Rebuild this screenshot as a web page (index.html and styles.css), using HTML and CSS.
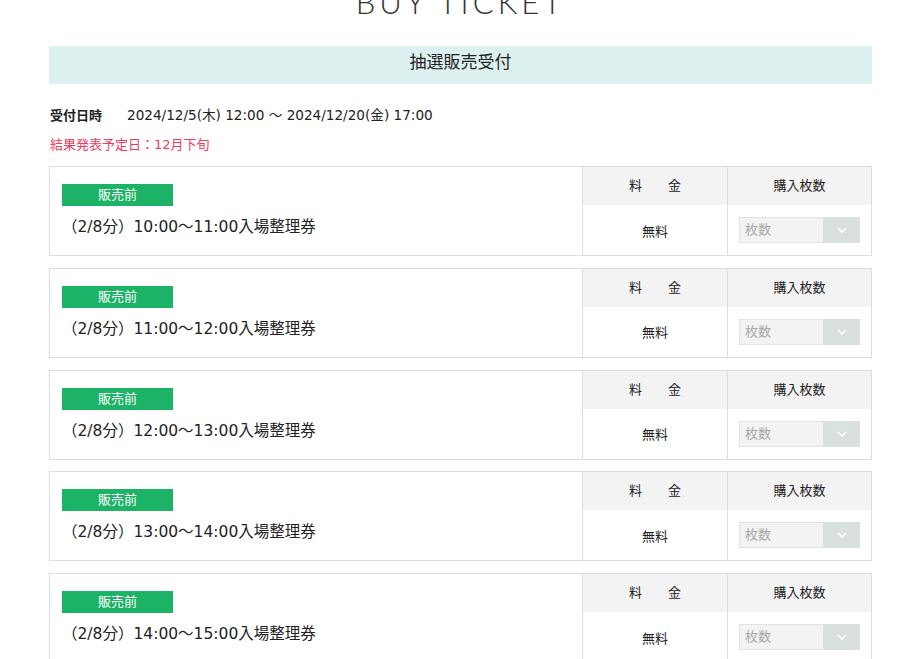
FILE: index.html
```html
<!DOCTYPE html>
<html lang="ja">
<head>
<meta charset="utf-8">
<link rel="stylesheet" href="styles.css">
</head>
<body>
<div class="page">
  <h1 class="title">BUY TICKET</h1>
  <div class="section-bar">抽選販売受付</div>
  <div class="period"><span class="period-label">受付日時</span><span class="period-value">2024/12/5(木) 12:00 ～ 2024/12/20(金) 17:00</span></div>
  <p class="notice">結果発表予定日：12月下旬</p>

  <div class="ticket">
    <div class="ticket-info">
      <span class="badge">販売前</span>
      <p class="ticket-name">（2/8分）10:00～11:00入場整理券</p>
    </div>
    <div class="ticket-col price">
      <div class="col-head">料　　金</div>
      <div class="col-body">無料</div>
    </div>
    <div class="ticket-col qty">
      <div class="col-head">購入枚数</div>
      <div class="col-body"><div class="select"><span class="select-text">枚数</span><span class="select-arrow"><svg width="12" height="8" viewBox="0 0 12 8"><path d="M2 2l4 4 4-4" fill="none" stroke="#fff" stroke-width="1.6"/></svg></span></div></div>
    </div>
  </div>

  <div class="ticket">
    <div class="ticket-info">
      <span class="badge">販売前</span>
      <p class="ticket-name">（2/8分）11:00～12:00入場整理券</p>
    </div>
    <div class="ticket-col price">
      <div class="col-head">料　　金</div>
      <div class="col-body">無料</div>
    </div>
    <div class="ticket-col qty">
      <div class="col-head">購入枚数</div>
      <div class="col-body"><div class="select"><span class="select-text">枚数</span><span class="select-arrow"><svg width="12" height="8" viewBox="0 0 12 8"><path d="M2 2l4 4 4-4" fill="none" stroke="#fff" stroke-width="1.6"/></svg></span></div></div>
    </div>
  </div>

  <div class="ticket">
    <div class="ticket-info">
      <span class="badge">販売前</span>
      <p class="ticket-name">（2/8分）12:00～13:00入場整理券</p>
    </div>
    <div class="ticket-col price">
      <div class="col-head">料　　金</div>
      <div class="col-body">無料</div>
    </div>
    <div class="ticket-col qty">
      <div class="col-head">購入枚数</div>
      <div class="col-body"><div class="select"><span class="select-text">枚数</span><span class="select-arrow"><svg width="12" height="8" viewBox="0 0 12 8"><path d="M2 2l4 4 4-4" fill="none" stroke="#fff" stroke-width="1.6"/></svg></span></div></div>
    </div>
  </div>

  <div class="ticket">
    <div class="ticket-info">
      <span class="badge">販売前</span>
      <p class="ticket-name">（2/8分）13:00～14:00入場整理券</p>
    </div>
    <div class="ticket-col price">
      <div class="col-head">料　　金</div>
      <div class="col-body">無料</div>
    </div>
    <div class="ticket-col qty">
      <div class="col-head">購入枚数</div>
      <div class="col-body"><div class="select"><span class="select-text">枚数</span><span class="select-arrow"><svg width="12" height="8" viewBox="0 0 12 8"><path d="M2 2l4 4 4-4" fill="none" stroke="#fff" stroke-width="1.6"/></svg></span></div></div>
    </div>
  </div>

  <div class="ticket">
    <div class="ticket-info">
      <span class="badge">販売前</span>
      <p class="ticket-name">（2/8分）14:00～15:00入場整理券</p>
    </div>
    <div class="ticket-col price">
      <div class="col-head">料　　金</div>
      <div class="col-body">無料</div>
    </div>
    <div class="ticket-col qty">
      <div class="col-head">購入枚数</div>
      <div class="col-body"><div class="select"><span class="select-text">枚数</span><span class="select-arrow"><svg width="12" height="8" viewBox="0 0 12 8"><path d="M2 2l4 4 4-4" fill="none" stroke="#fff" stroke-width="1.6"/></svg></span></div></div>
    </div>
  </div>
</div>
</body>
</html>
```
FILE: styles.css
```css
html, body {
  margin: 0;
  padding: 0;
  background: #fff;
  overflow: hidden;
}
body {
  font-family: "DejaVu Sans", "Noto Sans CJK JP", sans-serif;
  color: #222;
}
.page {
  width: 823px;
  margin-left: 49px;
}
.title {
  margin: -13px 0 0;
  font-family: "Lato", "Noto Sans", sans-serif;
  font-weight: 300;
  font-size: 31px;
  line-height: 31px;
  letter-spacing: 4px;
  text-align: center;
  color: #333;
}
.section-bar {
  margin-top: 28px;
  height: 38px;
  line-height: 33px;
  background: #ddf2f0;
  text-align: center;
  font-size: 17px;
  color: #222;
}
.period {
  margin-top: 21px;
  display: flex;
  align-items: center;
  height: 18px;
  font-size: 13.6px;
}
.period-label {
  font-weight: bold;
  font-size: 13px;
  width: 77px;
  padding-left: 1px;
}
.period-value {
  color: #222;
}
.notice {
  margin: 13px 0 0 1px;
  font-size: 13px;
  line-height: 18px;
  color: #ef3a5d;
}
.ticket {
  margin-top: 11.75px;
  display: flex;
  border: 1px solid #d9dfde;
  height: 88px;
}
.notice + .ticket {
  margin-top: 12px;
}
.ticket-info {
  flex: 1;
  padding: 17px 12px 0;
}
.badge {
  display: block;
  width: 111px;
  height: 22px;
  line-height: 21px;
  background: #1cb366;
  color: #fff;
  text-align: center;
  font-size: 13px;
}
.ticket-name {
  margin: 10px 0 0;
  font-size: 15.5px;
  line-height: 22px;
  color: #222;
}
.ticket-col {
  display: flex;
  flex-direction: column;
  border-left: 1px solid #d9dfde;
}
.price {
  width: 144px;
}
.qty {
  width: 143px;
}
.col-head {
  height: 38px;
  line-height: 38px;
  background: #f3f3f3;
  text-align: center;
  font-size: 13px;
}
.col-body {
  flex: 1;
  display: flex;
  align-items: center;
  justify-content: center;
  font-size: 13px;
}
.select {
  display: flex;
  width: 121px;
  height: 26px;
}
.select-text {
  flex: 1;
  background: #f3f3f3;
  border: 1px solid #e0e3e3;
  border-right: none;
  color: #a8a8a8;
  font-size: 13px;
  line-height: 24px;
  padding-left: 5px;
}
.select-arrow {
  width: 37px;
  background: #d9e1e0;
  display: flex;
  align-items: center;
  justify-content: center;
}
```
